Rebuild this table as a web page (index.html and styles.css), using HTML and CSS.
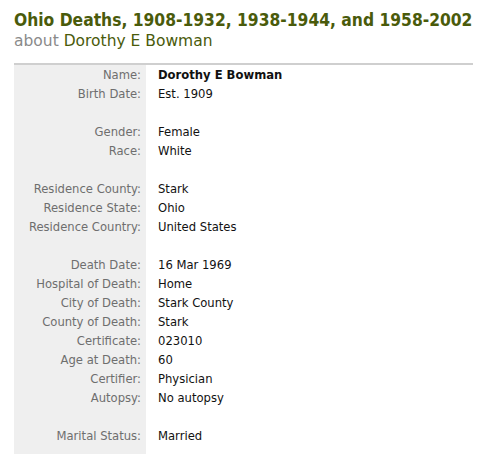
FILE: index.html
```html
<!DOCTYPE html>
<html>
<head>
<meta charset="utf-8">
<link rel="stylesheet" href="styles.css">
</head>
<body>
<div class="page">
  <h1 class="title">Ohio Deaths, 1908-1932, 1938-1944, and 1958-2002</h1>
  <div class="subtitle"><span class="about">about</span> <span class="who">Dorothy E Bowman</span></div>
  <table class="record">
    <tbody>
      <tr><th>Name:</th><td><b>Dorothy E Bowman</b></td></tr>
      <tr><th>Birth Date:</th><td>Est. 1909</td></tr>
      <tr class="blank"><th></th><td></td></tr>
      <tr><th>Gender:</th><td>Female</td></tr>
      <tr><th>Race:</th><td>White</td></tr>
      <tr class="blank"><th></th><td></td></tr>
      <tr><th>Residence County:</th><td>Stark</td></tr>
      <tr><th>Residence State:</th><td>Ohio</td></tr>
      <tr><th>Residence Country:</th><td>United States</td></tr>
      <tr class="blank"><th></th><td></td></tr>
      <tr><th>Death Date:</th><td>16 Mar 1969</td></tr>
      <tr><th>Hospital of Death:</th><td>Home</td></tr>
      <tr><th>City of Death:</th><td>Stark County</td></tr>
      <tr><th>County of Death:</th><td>Stark</td></tr>
      <tr><th>Certificate:</th><td>023010</td></tr>
      <tr><th>Age at Death:</th><td>60</td></tr>
      <tr><th>Certifier:</th><td>Physician</td></tr>
      <tr><th>Autopsy:</th><td>No autopsy</td></tr>
      <tr class="blank"><th></th><td></td></tr>
      <tr><th>Marital Status:</th><td>Married</td></tr>
    </tbody>
  </table>
</div>
</body>
</html>
```

FILE: styles.css
```css
html, body {
  margin: 0;
  padding: 0;
  background: #ffffff;
}
.page {
  padding: 9px 17px 0 14px;
  font-family: "DejaVu Sans", Verdana, sans-serif;
}
.title {
  margin: 0;
  font-family: "DejaVu Sans Condensed", "DejaVu Sans", Tahoma, sans-serif;
  font-size: 17.3px;
  font-weight: bold;
  color: #4a5b0b;
  line-height: 22px;
  white-space: nowrap;
}
.subtitle {
  font-size: 15.5px;
  line-height: 20px;
}
.subtitle .about {
  color: #8a8a8a;
}
.subtitle .who {
  color: #4a5b0b;
}
.record {
  margin-top: 12px;
  width: 100%;
  border-collapse: collapse;
  border-top: 2px solid #cfcfcf;
  font-size: 11.6px;
}
.record th {
  width: 132px;
  box-sizing: border-box;
  background: #efefef;
  color: #6e6e6e;
  font-weight: normal;
  text-align: right;
  padding: 0 5px 0 0;
  height: 19px;
  line-height: 19px;
  white-space: nowrap;
}
.record td {
  color: #111111;
  padding: 0 0 0 12px;
  height: 19px;
  line-height: 19px;
}
.record tr:first-child th,
.record tr:first-child td {
  padding-top: 1px;
}
.record tr:last-child th,
.record tr:last-child td {
  padding-bottom: 8px;
}
```
